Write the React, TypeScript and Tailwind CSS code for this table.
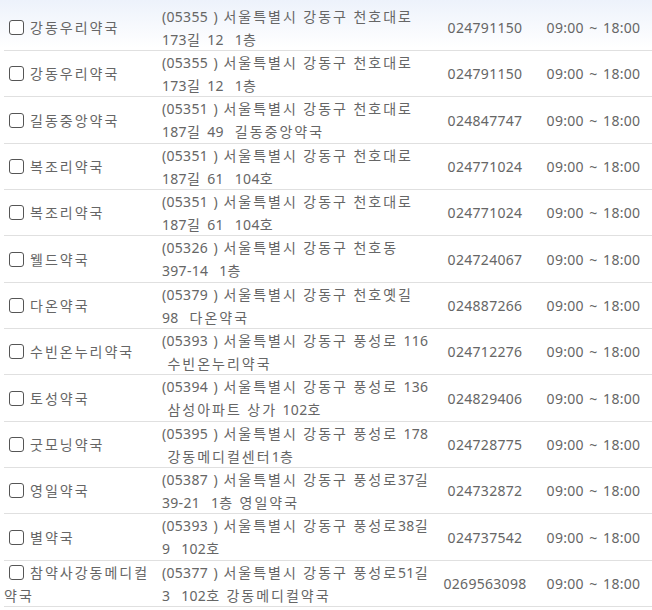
import React from "react";

type Row = { name: string[]; a1: string; a2: string; tel: string };

const rows: Row[] = [
  { name: ["강동우리약국"], a1: "(05355 ) 서울특별시 강동구 천호대로", a2: "173길 12 \u00a01층", tel: "024791150" },
  { name: ["강동우리약국"], a1: "(05355 ) 서울특별시 강동구 천호대로", a2: "173길 12 \u00a01층", tel: "024791150" },
  { name: ["길동중앙약국"], a1: "(05351 ) 서울특별시 강동구 천호대로", a2: "187길 49 \u00a0길동중앙약국", tel: "024847747" },
  { name: ["복조리약국"], a1: "(05351 ) 서울특별시 강동구 천호대로", a2: "187길 61 \u00a0104호", tel: "024771024" },
  { name: ["복조리약국"], a1: "(05351 ) 서울특별시 강동구 천호대로", a2: "187길 61 \u00a0104호", tel: "024771024" },
  { name: ["웰드약국"], a1: "(05326 ) 서울특별시 강동구 천호동", a2: "397-14 \u00a01층", tel: "024724067" },
  { name: ["다온약국"], a1: "(05379 ) 서울특별시 강동구 천호옛길", a2: "98 \u00a0다온약국", tel: "024887266" },
  { name: ["수빈온누리약국"], a1: "(05393 ) 서울특별시 강동구 풍성로 116", a2: "\u00a0수빈온누리약국", tel: "024712276" },
  { name: ["토성약국"], a1: "(05394 ) 서울특별시 강동구 풍성로 136", a2: "\u00a0삼성아파트 상가 102호", tel: "024829406" },
  { name: ["굿모닝약국"], a1: "(05395 ) 서울특별시 강동구 풍성로 178", a2: "\u00a0강동메디컬센터1층", tel: "024728775" },
  { name: ["영일약국"], a1: "(05387 ) 서울특별시 강동구 풍성로37길", a2: "39-21 \u00a01층 영일약국", tel: "024732872" },
  { name: ["별약국"], a1: "(05393 ) 서울특별시 강동구 풍성로38길", a2: "9 \u00a0102호", tel: "024737542" },
  { name: ["참약사강동메디컬", "약국"], a1: "(05377 ) 서울특별시 강동구 풍성로51길", a2: "3 \u00a0102호 강동메디컬약국", tel: "0269563098" },
];

function K({ text }: { text: string }) {
  const parts = text.split(/([\uac00-\ud7a3]+)/);
  return (
    <>
      {parts.map((p, i) =>
        /[\uac00-\ud7a3]/.test(p) ? (
          <span key={i} className="tracking-[2px]">
            {p}
          </span>
        ) : (
          <span key={i}>{p}</span>
        )
      )}
    </>
  );
}

function Box() {
  return (
    <span className="inline-block align-[-2px] w-[15px] h-[15px] rounded-[3px] border-[1.5px] border-[#555] bg-white ml-[5px] mr-[6px]" />
  );
}

export default function App() {
  return (
    <div
      className="w-[652px] h-[610px] overflow-hidden bg-[linear-gradient(to_bottom,#edf2fb_0px,#ffffff_48px)] pt-[4.67px] text-[14px] leading-[23px] text-[#666] tracking-[0.3px] [word-spacing:1.5px]"
      style={{ fontFamily: '"Noto Sans", "Noto Sans CJK KR", sans-serif' }}
    >
      {rows.map((r, i) => (
        <div
          key={i}
          className="ml-[4px] grid grid-cols-[153px_278px_100px_117px] items-center h-[46.33px] border-b border-[#e0e0e0]"
        >
          <div className="whitespace-nowrap">
            <Box />
            <K text={r.name[0]} />
            {r.name.length > 1 && (
              <>
                <br />
                <K text={r.name[1]} />
              </>
            )}
          </div>
          <div className="pl-[5px] whitespace-pre">
            <div>
              <K text={r.a1} />
            </div>
            <div>
              <K text={r.a2} />
            </div>
          </div>
          <div className="text-center">{r.tel}</div>
          <div className="text-center whitespace-pre">09:00 ~ 18:00</div>
        </div>
      ))}
    </div>
  );
}
